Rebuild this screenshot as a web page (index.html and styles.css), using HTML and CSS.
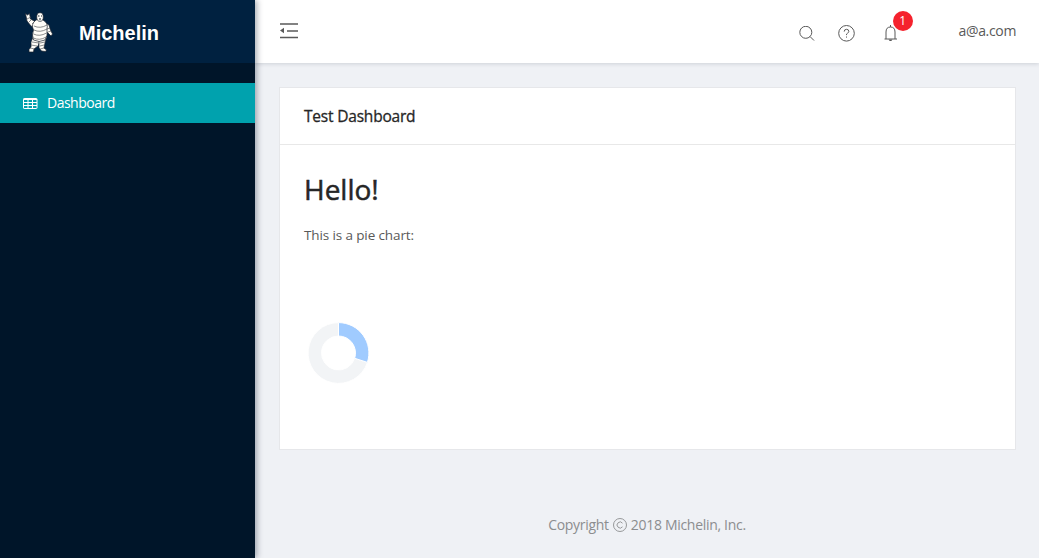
FILE: index.html
```html
<!DOCTYPE html>
<html lang="en">
<head>
<meta charset="utf-8">
<title>Michelin Dashboard</title>
<link rel="stylesheet" href="styles.css">
</head>
<body>
<div class="layout">
  <aside class="sider">
    <div class="logo">
      <svg class="mascot" width="32" height="42" viewBox="0 0 32 42">
        <g stroke="#17202b" stroke-width=".7" fill="#fffdf8">
          <path d="M3 4 L2.500 1.500 L4.500 3 L6.500 1.500 L7.500 7 L13 10 L12 16 L8 14 L4 9 Z"/>
          <path d="M21 10 L26 13 L27.500 18 L29.500 22 L28 24 L24 20 L20 15 Z"/>
          <path d="M10 25 L18 27 L15 34 L11 37 L10.500 40 L6 40 L6 37.500 L8 35 L8 30 Z"/>
          <path d="M16 27 L23.500 25 L22 31 L21 36 L23.500 38 L22.500 39.500 L18.500 39 L16 36 Z"/>
          <path d="M13 8 Q17 6 20 8 Q25.500 11 24 17 Q25 24 22 28 Q16 31 10.500 28 Q8.500 23 10.500 18 Q7.500 12 13 8 Z"/>
          <ellipse cx="17" cy="5" rx="3.300" ry="4.300"/>
        </g>
        <path d="M15 4h1.500M18 4h1M16 7h2" stroke="#17202b" stroke-width="1.100"/>
        <path d="M4 7l4-2M6 10l3-3M9 12l3-3M11 14q6 3 13-1M11 18q6 3 13-1M10.500 22q6 3 13-1M10.500 26q6 3 12.500-1M9 30l7 1M8 33l6 1M7 36l5 1M17 31l5-1M17 34l4-1M17 37l4-1M24 17l3-1M25 20l3-1" fill="none" stroke="#4e5154" stroke-width=".65"/>
      </svg>
      <span class="logo-text">Michelin</span>
    </div>
    <nav class="menu">
      <a class="menu-item">
        <svg width="15" height="11" viewBox="0 0 15 11"><rect x=".5" y=".5" width="13.500" height="10" rx=".6" fill="none" stroke="currentColor"/><path d="M1 1.500h13M1 4.500h13M1 7.500h13M5 1v9M9.500 1v9" fill="none" stroke="currentColor"/></svg>
        <span class="menu-label">Dashboard</span>
      </a>
    </nav>
  </aside>
  <div class="main">
    <header class="header">
      <svg class="fold" width="18" height="16" viewBox="0 0 18 16"><path d="M0 1h18M7 8h11M0 14.500h18" stroke="#595959" stroke-width="1.500"/><path d="M0 7.500L4 4.800v5.400z" fill="#595959"/></svg>
      <div class="actions">
        <svg class="search" width="16" height="16" viewBox="0 0 16 16"><g fill="none" stroke="#595959"><circle cx="6.800" cy="6.300" r="6"/><path d="M11 10.500l4 4"/></g></svg>
        <svg class="help" width="17" height="17" viewBox="0 0 17 17"><g fill="none" stroke="#595959"><circle cx="8.500" cy="8.300" r="7.800"/><path d="M6.200 6.600Q6.200 4.300 8.500 4.300T10.800 6.400Q10.800 7.600 9.500 8.200T8.500 10.100"/><path d="M8.500 11.500v1.100"/></g></svg>
        <div class="notice">
          <svg width="14" height="17" viewBox="0 0 14 17"><path d="M.5 14h12.500M2 14V7Q2 2 6.500 2T11 7V14M6.500 0v2" fill="none" stroke="#595959"/><path d="M4.500 14.500h4L7.300 16H5.700z" fill="#595959"/></svg>
          <span class="badge">1</span>
        </div>
        <span class="user">a@a.com</span>
      </div>
    </header>
    <section class="card">
      <div class="card-head"><span class="card-title">Test Dashboard</span></div>
      <div class="card-body">
        <h1 class="hello">Hello!</h1>
        <p class="intro">This is a pie chart:</p>
        <svg class="pie" width="69" height="68" viewBox="-34.500 -34 69 68">
          <g stroke="#fff">
            <path d="M28.910 9.390A30.400 30.400 0 1 1 0-30.400V-17A17 17 0 1 0 16.170 5.250Z" fill="#f2f4f6"/>
            <path d="M0-30.400A30.400 30.400 0 0 1 28.910 9.390L16.170 5.250A17 17 0 0 0 0-17Z" fill="#a0cbff"/>
          </g>
        </svg>
      </div>
    </section>
    <footer class="footer">
      <span class="copy">Copyright</span>
      <svg width="14" height="14" viewBox="0 0 14 14"><g fill="none" stroke="#8c8d8f" stroke-width=".9"><circle cx="7" cy="7" r="6.500"/><path d="M9.500 5.200A3 3 0 1 0 9.500 8.800"/></g></svg>
      <span class="owner">2018 Michelin, Inc.</span>
    </footer>
  </div>
</div>
</body>
</html>
```
FILE: styles.css
```css
* { box-sizing: border-box; }
body {
  margin: 0;
  font: 14px/21px "Open Sans", "Noto Sans", sans-serif;
  color: #595959;
  background: #f0f2f5;
}
svg { display: block; flex: none; }
.layout { display: flex; height: 558px; overflow: hidden; background: #eff1f5; }
.sider {
  position: relative;
  z-index: 2;
  width: 255px;
  flex: none;
  background: #001529;
  box-shadow: 2px 0 6px rgba(0, 21, 41, .35);
}
.logo { display: flex; align-items: center; height: 63px; padding-left: 23px; background: #002140; }
.mascot { margin-top: 2px; }
.logo-text {
  margin: 3px 0 0 24px;
  font: bold 20px/30px "Liberation Sans", Arial, sans-serif;
  color: #fff;
}
.menu { padding-top: 20px; }
.menu-item { display: flex; align-items: center; height: 40px; padding-left: 23px; background: #00a2ae; color: #fff; }
.menu-label { margin: 0 0 2px 9px; letter-spacing: -.5px; }
.main { flex: 1; min-width: 0; }
.header {
  display: flex;
  justify-content: space-between;
  height: 63px;
  padding: 0 23px 0 25px;
  background: #fff;
  box-shadow: 0 1px 4px rgba(0, 21, 41, .14);
}
.fold { margin-top: 23px; }
.actions { display: flex; align-items: flex-start; }
.search { margin-top: 26px; }
.help { margin: 25px 0 0 23px; }
.notice { position: relative; margin: 25px 0 0 29px; }
.badge {
  position: absolute;
  left: 9px;
  top: -14px;
  width: 20px;
  height: 20px;
  border-radius: 50%;
  background: #f5222d;
  color: #fff;
  font-size: 12px;
  line-height: 20px;
  text-align: center;
}
.user { margin: 20px 0 0 61px; letter-spacing: -.35px; }
.card { height: 363px; margin: 24px 23px 0 24px; border: 1px solid #e6e7ea; background: #fff; }
.card-head { height: 57px; padding: 16px 24px; border-bottom: 1px solid #e8e8e8; line-height: 24px; }
.card-title { font-size: 15.500px; font-weight: 500; letter-spacing: -.2px; color: #262626; -webkit-text-stroke: .3px #262626; }
.card-body { padding: 23px 24px; }
.hello { margin: 0; font-size: 28px; line-height: 42px; font-weight: 500; color: #262626; -webkit-text-stroke: .5px #262626; }
.intro { margin: 15px 0 0; font-size: 13.500px; letter-spacing: -.12px; }
.pie { margin-top: 73px; }
.footer {
  display: flex;
  align-items: center;
  justify-content: center;
  gap: 4px;
  margin-top: 64px;
  color: #8c8d8f;
  letter-spacing: -.3px;
}
```
